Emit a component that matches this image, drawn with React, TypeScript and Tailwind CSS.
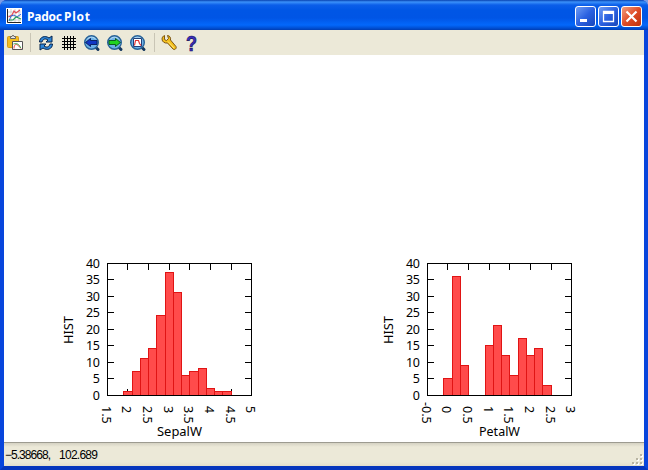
import type { ReactNode } from "react";

interface HistogramData {
  label: string;
  ticks: string[];
  bars: number[];
}

const sepal: HistogramData = {
  label: "SepalW",
  ticks: ["1.5", "2", "2.5", "3", "3.5", "4", "4.5", "5"],
  bars: [1, 7, 11, 14, 24, 37, 31, 6, 7, 8, 2, 1, 1],
};

const petal: HistogramData = {
  label: "PetalW",
  ticks: ["-0.5", "0", "0.5", "1", "1.5", "2", "2.5", "3"],
  bars: [5, 36, 9, 0, 0, 15, 21, 12, 6, 17, 12, 14, 3],
};

const LEFT = 47;
const TOP = 13;
const WIDTH = 144;
const HEIGHT = 132;
const BOTTOM = TOP + HEIGHT;
const yValues = [0, 5, 10, 15, 20, 25, 30, 35, 40];

// whole-pixel offsets from the left axis
const tickOffsets = [0, 20, 41, 62, 82, 103, 124, 144];
const barEdges = [16, 25, 33, 41, 49, 58, 66, 74, 82, 91, 99, 107, 115, 124];

const yPos = (v: number) => Math.floor(BOTTOM - (v * HEIGHT) / 40);
const xTick = (i: number) => LEFT + tickOffsets[i];
const xBar = (i: number) => LEFT + barEdges[i];

function Histogram({ data }: { data: HistogramData }) {
  return (
    <svg width="210" height="192" viewBox="0 0 210 192" className="block font-['Noto_Sans',sans-serif] text-[12.5px]">
      <g shapeRendering="crispEdges" fill="none" stroke="#000" strokeWidth="1">
        {data.ticks.map((t, i) => (
          <path key={t} d={`M${xTick(i) + 0.5} ${TOP}v7M${xTick(i) + 0.5} ${BOTTOM}v-6`} />
        ))}
        {yValues.map((v) => (
          <path key={v} d={`M${LEFT} ${yPos(v) + 0.5}h7M${LEFT + WIDTH + 1} ${yPos(v) + 0.5}h-7`} />
        ))}
      </g>
      <g shapeRendering="crispEdges" fill="#ff4b4b" stroke="#e01414" strokeWidth="1">
        {data.bars.map((v, i) =>
          v > 0 ? (
            <rect key={i} x={xBar(i) + 0.5} y={yPos(v) + 0.5} width={xBar(i + 1) - xBar(i)} height={BOTTOM - yPos(v)} />
          ) : null
        )}
      </g>
      <rect x={LEFT + 0.5} y={TOP + 0.5} width={WIDTH} height={HEIGHT} fill="none" stroke="#000" shapeRendering="crispEdges" />
      <g fill="#000">
        {yValues.map((v) => (
          <text key={v} x="40" y={yPos(v) + 5} textAnchor="end" textLength={v >= 10 ? 14 : 7}>
            {v}
          </text>
        ))}
        {data.ticks.map((t, i) => (
          <text key={t} transform={`translate(${xTick(i) - 5} ${t.startsWith("-") ? 152 : 156}) rotate(90)`}>
            {t}
          </text>
        ))}
        <text transform="translate(13 94) rotate(-90)" textLength="28" lengthAdjust="spacingAndGlyphs">HIST</text>
        <text x={data.label === "SepalW" ? 97 : 99} y="186" textLength={data.label === "SepalW" ? 45 : 41} lengthAdjust="spacingAndGlyphs">
          {data.label}
        </text>
      </g>
    </svg>
  );
}

function Icon({ children }: { children: ReactNode }) {
  return (
    <svg width="18" height="18" viewBox="0 0 18 18" className="block shrink-0 overflow-visible">
      {children}
    </svg>
  );
}

function AppIcon() {
  return (
    <svg width="16" height="16" viewBox="0 0 16 16" className="block">
      <path fill="#fff" d="M0 0h16v16H0z" />
      <path stroke="#b5b5b5" strokeWidth=".6" d="M5 1v14M9 1v14M13 1v14M1 4h14M1 8h14M1 12h14" />
      <path fill="none" stroke="#222" d="M1.5 1v13.5H15" />
      <path fill="none" stroke="#e24b57" strokeWidth="1.2" d="M2.5 9L6 7l2-4 2 2 4-3" />
      <path fill="none" stroke="#3765d5" d="M3 13l2-5 3-1 3 2 4-3" />
      <path fill="none" stroke="#25a060" strokeWidth="1.2" d="M3 12h4l3-3 5 2" />
    </svg>
  );
}

function PasteIcon() {
  return (
    <Icon>
      <rect x="1.5" y="2.5" width="11" height="11" rx="1" fill="#f5bd20" stroke="#d99a18" />
      <path fill="#e7e7e7" stroke="#666" d="M4.5 4.5v-2H6L7 1l1 1.5h1.5v2z" />
      <path fill="#fff" stroke="#555" d="M6.5 7.5h10v8h-10z" />
      <path fill="none" stroke="#e44" d="M8 14.5c0-4 2-5 4-3s2 1 3 3" />
      <path fill="none" stroke="#31a43b" d="M7.5 10c3-1 6 0 7 4" />
    </Icon>
  );
}

function RefreshIcon() {
  return (
    <Icon>
      <path fill="#2e86d8" stroke="#07244d" d="M2.5 8C2.5 3 8 1 12 4l3-2v6H9l2-2C8 4 6 5 5 8z" />
      <path fill="#2e86d8" stroke="#07244d" d="M15.5 10c0 5-5.5 7-9.5 4l-3 2v-6h6l-2 2c3 2 5 1 6-2z" />
    </Icon>
  );
}

function GridIcon() {
  return (
    <Icon>
      <path stroke="#000" shapeRendering="crispEdges" d="M4.5 2v14M7.5 2v14M10.5 2v14M13.5 2v14M2 4.5h14M2 7.5h14M2 10.5h14M2 13.5h14" />
    </Icon>
  );
}

function LensIcon({ children }: { children: ReactNode }) {
  return (
    <Icon>
      <path stroke="#16385f" strokeWidth="3" strokeLinecap="round" d="M12.5 13l2.5 2.5" />
      <circle cx="8.5" cy="8.5" r="6.8" fill="#6db2e8" stroke="#286297" strokeWidth="1.4" />
      <path fill="none" stroke="#b5dcf5" d="M4 5.5C6 2.5 11 2.5 13 5.5" />
      {children}
    </Icon>
  );
}

function ToolSeparator() {
  return <div className="h-[19px] w-px bg-[#c9c5b5]" />;
}

function Toolbar() {
  return (
    <div className="flex h-[25px] items-center bg-[#ece9d8] pl-[2px]">
      <PasteIcon />
      <div className="mx-[6px]"><ToolSeparator /></div>
      <div className="flex gap-[5px]">
        <RefreshIcon />
        <GridIcon />
        <LensIcon>
          <path fill="#1237c4" stroke="#081b58" strokeWidth=".9" d="M2.5 8.5l5-4v2H14v4H7.5v2z" />
        </LensIcon>
        <LensIcon>
          <path fill="#21d321" stroke="#07511b" strokeWidth=".9" d="M14.5 8.5l-5-4v2H3v4h6.5v2z" />
        </LensIcon>
        <LensIcon>
          <path fill="#fff" stroke="#203f79" d="M4.5 4.5h8v8h-8z" />
          <path fill="none" stroke="#e13232" strokeWidth="1.2" d="M5.5 11.5l1-5h3l1 3 1.5 2" />
        </LensIcon>
      </div>
      <div className="ml-[7px] mr-[5px]"><ToolSeparator /></div>
      <div className="flex gap-[5px]">
        <Icon>
          <path fill="#f4c01d" stroke="#70480b" strokeWidth=".9" strokeLinejoin="round" d="M4.5 1.5v4l2 1 2-2-1-3c2 0 3.5 2 3 4.5l5.5 6.500c1 2-1.500 4-3 2.500L7.500 9C5 9.500 2 8 2 5c0-1.500 1-3 2.500-3.500z" />
          <path stroke="#ffe77a" d="M8 7.5l6 6.500" />
        </Icon>
        <svg width="18" height="22" viewBox="0 0 18 22" className="-my-[2px] block overflow-visible">
          <text x="3" y="18.5" textLength="11" lengthAdjust="spacingAndGlyphs" className="font-['Liberation_Sans',sans-serif] text-[22px] leading-none font-bold" fill="#3a2fc0" stroke="#130e56" strokeWidth=".7">?</text>
        </svg>
      </div>
    </div>
  );
}

function WindowButton({ close, children }: { close?: boolean; children: ReactNode }) {
  return (
    <button
      className={
        close
          ? "flex size-[21px] items-center justify-center rounded-[3px] border border-white bg-linear-to-br from-[#f09b7d] via-[#df4b25] to-[#bd320d]"
          : "flex size-[21px] items-center justify-center rounded-[3px] border border-white bg-linear-to-br from-[#6f9bf3] via-[#2b61e1] to-[#1746bb]"
      }
    >
      <svg width="19" height="19" viewBox="0 0 19 19" fill="none" stroke="#fff" className="block shrink-0">
        {children}
      </svg>
    </button>
  );
}

function TitleBar() {
  return (
    <div className="flex h-[30px] items-center bg-[linear-gradient(180deg,#0842b0_0,#3b91fa_2px,#0b5ee9_5px,#0056e5_10px,#0055e5_18px,#0368fb_25px,#0050d5_28px,#003db2_30px)] pl-[6px] pr-[6px]">
      <div className="pt-[2px]"><AppIcon /></div>
      <div className="ml-[4px] pt-[3px]">
        <svg width="70" height="18" className="block font-['Noto_Sans',sans-serif] text-[12px] font-bold" fill="#fff">
          <text y="13">
            <tspan x="1" textLength="35">Padoc</tspan>
            <tspan x="38" textLength="26">Plot</tspan>
          </text>
        </svg>
      </div>
      <div className="ml-auto flex gap-[2px] pt-[3px]">
        <WindowButton><path strokeWidth="3" d="M4 13.5h7" /></WindowButton>
        <WindowButton>
          <path strokeWidth="1.3" d="M4.5 4.5h10v10h-10z" />
          <path strokeWidth="3" d="M4 5.5h11" />
        </WindowButton>
        <WindowButton close><path strokeWidth="2.2" d="M4.5 4.5l10 10m0-10l-10 10" /></WindowButton>
      </div>
    </div>
  );
}

function StatusBar() {
  return (
    <div className="flex h-[24px] items-center justify-between border-t border-[#9d9b90] bg-[linear-gradient(180deg,#d5d2c3_0,#ece9d8_4px,#ece9d8_19px,#e3dfcc_23px)]">
      <svg width="110" height="20" className="block font-['Liberation_Sans',sans-serif] text-[12px]">
        <text x="1" y="14" textLength="46">−5.38668,</text>
        <text x="55" y="14" textLength="39">102.689</text>
      </svg>
      <svg width="13" height="13" className="mt-auto block" shapeRendering="crispEdges">
        <path fill="#fff" d="M10 2h2v2h-2zM6 6h2v2H6zM10 6h2v2h-2zM2 10h2v2H2zM6 10h2v2H6zM10 10h2v2h-2z" />
        <path fill="#b8b4a2" d="M9 1h2v2H9zM5 5h2v2H5zM9 5h2v2H9zM1 9h2v2H1zM5 9h2v2H5zM9 9h2v2H9z" />
      </svg>
    </div>
  );
}

export default function App() {
  return (
    <div className="h-[470px] w-[648px] bg-[#7b9de6]">
      <div className="flex h-full flex-col overflow-hidden rounded-t-[7px] bg-[#0831d9]">
        <TitleBar />
        <div className="flex flex-1 flex-col border-x-4 border-b-4 border-x-[#0845dc] border-b-[#0636bd]">
          <Toolbar />
          <main className="flex h-[387px] items-end gap-[110px] bg-white pl-[56px]">
            <Histogram data={sepal} />
            <Histogram data={petal} />
          </main>
          <StatusBar />
        </div>
      </div>
    </div>
  );
}
